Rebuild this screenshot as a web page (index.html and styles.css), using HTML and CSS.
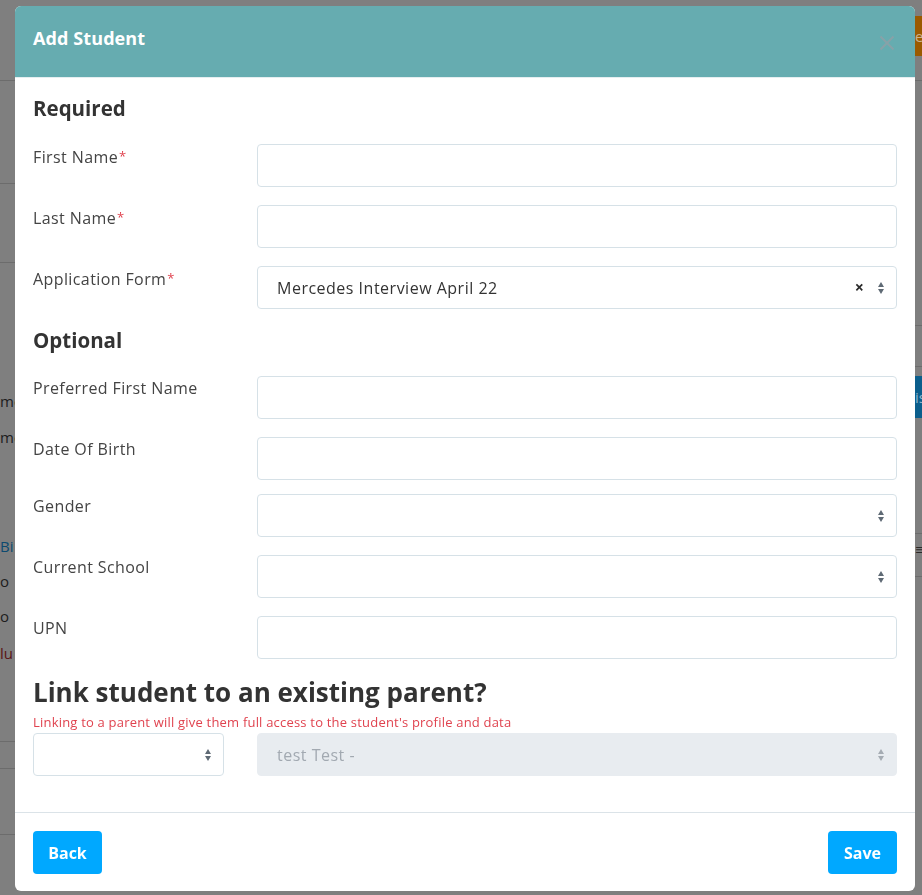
FILE: index.html
```html
<!DOCTYPE html>
<html lang="en">
<head>
<meta charset="utf-8">
<title>Add Student</title>
<link rel="stylesheet" href="styles.css">
</head>
<body>
  <!-- page underneath the dialog, dimmed by the backdrop -->
  <div class="page">
    <div class="page-left">
      <div class="pl-rule pl-r1"></div>
      <div class="pl-rule pl-r2"></div>
      <div class="pl-rule pl-r3"></div>
      <div class="pl-text pl-t1">me</div>
      <div class="pl-text pl-t2">me</div>
      <div class="pl-text pl-t3 pl-link">Bi</div>
      <div class="pl-text pl-t4">o</div>
      <div class="pl-text pl-t5">o</div>
      <div class="pl-text pl-t6 pl-warn">lu</div>
      <div class="pl-rule pl-r4"></div>
      <div class="pl-rule pl-r5"></div>
      <div class="pl-rule pl-r6"></div>
    </div>
    <div class="page-right">
      <div class="pr-btn-orange">e</div>
      <div class="pl-rule pr-r1"></div>
      <div class="pl-rule pr-r2"></div>
      <div class="pl-rule pr-r3"></div>
      <div class="pr-btn-blue">is</div>
      <div class="pl-rule pr-r4"></div>
      <div class="pr-menu">&#8801;</div>
      <div class="pl-rule pr-r5"></div>
    </div>
  </div>

  <div class="modal" role="dialog" aria-labelledby="modal-title">
    <div class="modal-header">
      <h3 id="modal-title" class="modal-title">Add Student</h3>
      <button class="modal-close" aria-label="Close">
        <svg width="16" height="16" viewBox="0 0 16 16"><path d="M1.5 1.5 L14.5 14.5 M14.5 1.5 L1.5 14.5" stroke="#87a2a8" stroke-width="2" fill="none"/></svg>
      </button>
    </div>

    <div class="modal-body">
      <h4 class="section-title">Required</h4>
      <div class="form-row">
        <label class="form-label">First Name<span class="req">*</span></label>
        <div class="form-control"></div>
      </div>
      <div class="form-row">
        <label class="form-label">Last Name<span class="req">*</span></label>
        <div class="form-control"></div>
      </div>
      <div class="form-row">
        <label class="form-label">Application Form<span class="req">*</span></label>
        <div class="form-control select">
          <span class="select-value">Mercedes Interview April 22</span>
          <span class="select-clear">&#215;</span>
          <span class="select-arrows"><i class="arr-up"></i><i class="arr-down"></i></span>
        </div>
      </div>

      <h4 class="section-title section-gap">Optional</h4>
      <div class="form-row">
        <label class="form-label">Preferred First Name</label>
        <div class="form-control"></div>
      </div>
      <div class="form-row row-tight">
        <label class="form-label">Date Of Birth</label>
        <div class="form-control"></div>
      </div>
      <div class="form-row">
        <label class="form-label">Gender</label>
        <div class="form-control select">
          <span class="select-value"></span>
          <span class="select-arrows"><i class="arr-up"></i><i class="arr-down"></i></span>
        </div>
      </div>
      <div class="form-row">
        <label class="form-label">Current School</label>
        <div class="form-control select">
          <span class="select-value"></span>
          <span class="select-arrows"><i class="arr-up"></i><i class="arr-down"></i></span>
        </div>
      </div>
      <div class="form-row">
        <label class="form-label">UPN</label>
        <div class="form-control"></div>
      </div>

      <h3 class="link-title">Link student to an existing parent?</h3>
      <p class="link-warning">Linking to a parent will give them full access to the student's profile and data</p>
      <div class="parent-row">
        <div class="form-control select parent-type">
          <span class="select-value"></span>
          <span class="select-arrows"><i class="arr-up"></i><i class="arr-down"></i></span>
        </div>
        <div class="form-control select disabled">
          <span class="select-value">test Test -</span>
          <span class="select-arrows"><i class="arr-up"></i><i class="arr-down"></i></span>
        </div>
      </div>
    </div>

    <div class="modal-footer">
      <button class="btn">Back</button>
      <button class="btn">Save</button>
    </div>
  </div>
</body>
</html>
```

FILE: styles.css
```css
* { box-sizing: border-box; }

html, body {
  margin: 0;
  padding: 0;
  height: 100%;
}

body {
  background: #7f7f7f;
  font-family: "Open Sans", Lato, "Liberation Sans", sans-serif;
  color: #333;
  overflow: hidden;
}

/* ---------- dimmed page behind ---------- */
.page {
  display: flex;
  justify-content: space-between;
  height: 100%;
}

.page-left {
  width: 15px;
  overflow: hidden;
  display: flex;
  flex-direction: column;
}

.page-right {
  width: 7px;
  overflow: hidden;
  display: flex;
  flex-direction: column;
}

.pl-rule {
  height: 1px;
  background: #6c6c6c;
  flex: none;
}

.pl-text {
  font-size: 15px;
  line-height: 20px;
  color: #1d1d1d;
  white-space: nowrap;
  flex: none;
}

.pl-link { color: #0c4a70; }
.pl-warn { color: #5a1414; }

.pl-r1 { margin-top: 80px; }
.pl-r2 { margin-top: 102px; }
.pl-r3 { margin-top: 78px; }
.pl-t1 { margin-top: 128px; }
.pl-t2 { margin-top: 16px; }
.pl-t3 { margin-top: 89px; }
.pl-t4 { margin-top: 15px; }
.pl-t5 { margin-top: 15px; }
.pl-t6 { margin-top: 17px; }
.pl-r4 { margin-top: 78px; }
.pl-r5 { margin-top: 26px; }
.pl-r6 { margin-top: 65px; }

.pr-btn-orange {
  margin-top: 16px;
  height: 40px;
  background: #9b5a00;
  color: #c9b38f;
  font-size: 15px;
  line-height: 40px;
  flex: none;
}
.pr-r1 { margin-top: 24px; }
.pr-r2 { margin-top: 244px; }
.pr-r3 { margin-top: 40px; }
.pr-btn-blue {
  margin-top: 9px;
  height: 42px;
  background: #0b5e8c;
  color: #8fb5cc;
  font-size: 15px;
  line-height: 42px;
  flex: none;
}
.pr-r4 { margin-top: 115px; }
.pr-menu {
  font-size: 15px;
  line-height: 18px;
  color: #2a2a2a;
  flex: none;
  margin-top: 6px;
}
.pr-r5 { margin-top: 18px; }

/* ---------- modal dialog ---------- */
.modal {
  position: fixed;
  left: 15px;
  top: 6px;
  width: 900px;
  height: 885px;
  background: #fff;
  border-radius: 6px;
  display: flex;
  flex-direction: column;
  overflow: hidden;
}

.modal-header {
  height: 72px;
  flex: none;
  background: #66acb0;
  display: flex;
  align-items: center;
  justify-content: space-between;
  padding: 0 18px;
  border-bottom: 1px solid #e5eef0;
}

.modal-title {
  margin: 0;
  color: #fff;
  font-size: 18px;
  font-weight: 700;
  line-height: 24px;
  letter-spacing: 0.1px;
  margin-top: -7px;
}

.modal-close {
  background: none;
  border: 0;
  padding: 0;
  width: 16px;
  height: 16px;
  margin-top: 2px;
  margin-right: 2px;
  cursor: pointer;
}
.modal-close svg { display: block; }

.modal-body {
  flex: 1;
  padding: 17px 18px 0;
}

.section-title {
  margin: 0 0 23px;
  font-size: 20.5px;
  line-height: 26px;
  font-weight: 700;
  color: #333;
}

.section-gap { margin-top: 18px; }

.form-row {
  display: grid;
  grid-template-columns: 224px 1fr;
  margin-bottom: 18px;
}
.form-row.row-tight { margin-bottom: 14px; }

.form-label {
  font-size: 16px;
  line-height: 22px;
  letter-spacing: 0.4px;
  color: #444;
  margin-top: 1px;
}

.req {
  color: #e0434f;
  font-size: 13px;
  vertical-align: 2px;
  margin-left: 1px;
}

.form-control {
  height: 43px;
  border: 1px solid #d6e1e7;
  border-radius: 4px;
  background: #fff;
  display: flex;
  align-items: center;
  padding: 0 11px 0 19px;
}

.select-value {
  flex: 1;
  font-size: 16px;
  letter-spacing: 0.5px;
  color: #333;
  white-space: nowrap;
}

.select-clear {
  font-size: 16px;
  line-height: 1;
  color: #2b2b2b;
  font-weight: 700;
  margin-right: 14px;
  margin-top: -1px;
}

.select-arrows {
  display: flex;
  flex-direction: column;
  gap: 2px;
  width: 7px;
}
.arr-up, .arr-down {
  display: block;
  width: 0;
  height: 0;
  border-left: 3.5px solid transparent;
  border-right: 3.5px solid transparent;
}
.arr-up { border-bottom: 5px solid #5f6a75; }
.arr-down { border-top: 5px solid #5f6a75; }

.link-title {
  margin: 15px 0 7px;
  font-size: 26px;
  line-height: 30px;
  font-weight: 700;
  color: #333;
}

.link-warning {
  margin: 0 0 3px;
  font-size: 13px;
  letter-spacing: 0.2px;
  line-height: 16px;
  color: #e0434f;
}

.parent-row {
  display: grid;
  grid-template-columns: 191px 1fr;
  column-gap: 33px;
}

.form-control.disabled {
  background: #e8ecf0;
  border-color: #e8ecf0;
}
.form-control.disabled .select-value { color: #a2a9b1; }
.form-control.disabled .arr-up { border-bottom-color: #a5acb3; }
.form-control.disabled .arr-down { border-top-color: #a5acb3; }

.modal-footer {
  flex: none;
  height: 79px;
  border-top: 1px solid #dbe3e8;
  display: flex;
  justify-content: space-between;
  align-items: flex-start;
  padding: 18px 18px 0;
}

.btn {
  height: 43px;
  min-width: 69px;
  padding: 0 12px;
  border: 0;
  border-radius: 4px;
  background: #00a8ff;
  color: #fff;
  font-family: "Open Sans", Lato, "Liberation Sans", sans-serif;
  font-size: 16px;
  font-weight: 700;
  cursor: pointer;
}
```
